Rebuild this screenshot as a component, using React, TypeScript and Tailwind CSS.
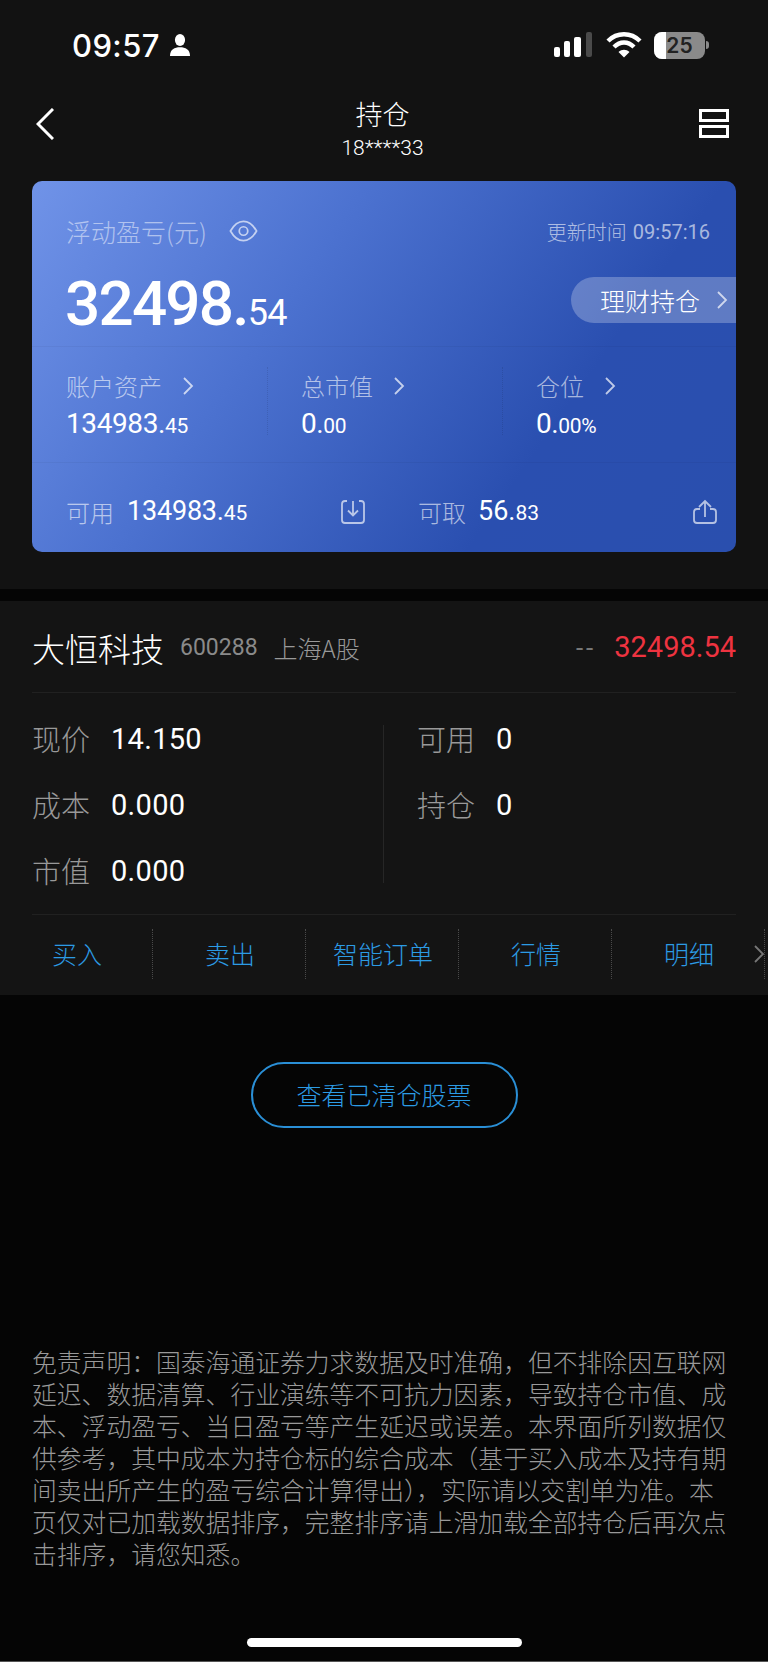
const din = "font-['Roboto','Liberation_Sans',sans-serif]";
const cjk = "font-['Noto_Sans_CJK_SC',sans-serif] font-light";

// full-width punctuation, written as escapes so it survives editing
const colon = "\uFF1A";
const comma = "\uFF0C";
const open = "\uFF08";
const close = "\uFF09";
const disclaimer = `免责声明${colon}国泰海通证券力求数据及时准确${comma}但不排除因互联网延迟、数据清算、行业演练等不可抗力因素${comma}导致持仓市值、成本、浮动盈亏、当日盈亏等产生延迟或误差。本界面所列数据仅供参考${comma}其中成本为持仓标的综合成本${open}基于买入成本及持有期间卖出所产生的盈亏综合计算得出${close}${comma}实际请以交割单为准。本页仅对已加载数据排序${comma}完整排序请上滑加载全部持仓后再次点击排序${comma}请您知悉。`;

function Chevron({ className = "h-5 w-3" }: { className?: string }) {
  return (
    <svg viewBox="0 0 12 20" fill="none" stroke="currentColor" strokeWidth="1.8" className={className} aria-hidden>
      <path d="M2 2 L10 10 L2 18" />
    </svg>
  );
}

function StatusBar() {
  return (
    <div className="flex h-[90px] items-center justify-between pl-[72px] pr-[59px]">
      <div className="flex items-center gap-[10px]">
        <span className="font-['Inter',sans-serif] text-[31px] font-medium leading-none tracking-[0.4px] text-white">09:57</span>
        <svg viewBox="0 0 22 24" className="h-[22px] w-[20px]" fill="#fff" aria-hidden>
          <ellipse cx="11" cy="6.5" rx="5.6" ry="6.5" />
          <path d="M0 24 C0 17 5 14.5 11 14.5 C17 14.5 22 17 22 24 Z" />
        </svg>
      </div>
      <div className="flex items-center">
        <svg viewBox="0 0 39 26" className="h-[26px] w-[39px]" aria-hidden>
          <rect x="0" y="15" width="6" height="10" rx="2" fill="#fff" />
          <rect x="10" y="9" width="6" height="16" rx="2" fill="#fff" />
          <rect x="20" y="5" width="7" height="20" rx="2" fill="#fff" />
          <rect x="32" y="0" width="6" height="25" rx="2" fill="#4a4a4a" />
        </svg>
        <svg viewBox="0 0 36 26" className="ml-[13px] h-[26px] w-9" fill="none" stroke="#fff" aria-hidden>
          <path d="M2 9 C11 0 25 0 34 9" strokeWidth="4.4" />
          <path d="M8 15 C14 9 22 9 28 15" strokeWidth="4.4" />
          <path d="M12.5 20 L18 25.5 L23.5 20 C20 17 16 17 12.5 20 Z" fill="#fff" stroke="none" />
        </svg>
        <div className="relative ml-[12px] h-[27px] w-[51px] overflow-hidden rounded-[8px] bg-[#8a8a8a]">
          <div className="absolute inset-y-0 left-0 w-3 bg-white" />
          <span className="absolute inset-0 flex items-center justify-center font-['Inter',sans-serif] text-[21px] font-semibold leading-none text-[#222]">25</span>
        </div>
        <div className="ml-[1px] h-2 w-[3px] rounded-r-full bg-[#8a8a8a]" />
      </div>
    </div>
  );
}

function NavBar() {
  return (
    <div className="flex h-[91px] items-start pl-9 pr-[39px]">
      <div className="flex-1">
        <svg viewBox="0 0 18 32" fill="none" stroke="#fff" strokeWidth="3" className="mt-[18px] h-8 w-[18px]" aria-hidden>
          <path d="M17 1 L2 16 L17 31" />
        </svg>
      </div>
      <div className="flex flex-col items-center pt-[7px]">
        <span className={`${cjk} text-[27px] leading-[34px] text-white`}>持仓</span>
        <span className={`${din} mt-[5px] text-[21px] font-light leading-6 text-white`}>18****33</span>
      </div>
      <div className="flex flex-1 justify-end">
        <div className="mt-[19px] flex w-[30px] flex-col gap-[3px]">
          <div className="h-[13px] border-[3px] border-white" />
          <div className="h-[13px] border-[3px] border-white" />
        </div>
      </div>
    </div>
  );
}

function Money({ whole, frac, size, small }: { whole: string; frac: string; size: string; small: string }) {
  return (
    <span className={`${din} text-white ${size}`}>
      {whole}.<span className={small}>{frac}</span>
    </span>
  );
}

function Metric({ label, whole, frac, width, divider }: { label: string; whole: string; frac: string; width: string; divider?: boolean }) {
  return (
    <div className={`${width} relative`}>
      <div className="flex items-center gap-[20px]">
        <span className={`${cjk} text-[24px] leading-8 text-white/60`}>{label}</span>
        <Chevron className="h-[22px] w-3 text-white/70" />
      </div>
      <div className="mt-[6px] leading-8">
        <Money whole={whole} frac={frac} size="text-[28px] tracking-[-0.4px]" small="text-[21px]" />
      </div>
      {divider && <div className="absolute right-[33px] top-[-3px] h-[68px] border-r border-dotted border-black/10" />}
    </div>
  );
}

function HoldingsCard() {
  return (
    <div className="mx-8 h-[371px] overflow-hidden rounded-[10px] bg-[linear-gradient(125deg,#7093e8_0%,#4c72d0_35%,#2a4fb0_72%,#2a4fae_100%)]">
      <div className="flex h-[66px] items-end justify-between pl-[34px] pr-[26px]">
        <div className="flex items-center gap-[22px]">
          <span className={`${cjk} text-[25px] leading-8 text-white/50`}>浮动盈亏(元)</span>
          <svg viewBox="0 0 30 24" fill="none" stroke="currentColor" strokeWidth="1.8" className="h-[24px] w-[29px] text-white/65" aria-hidden>
            <path d="M1.5 12 C6 4 10 2 15 2 C20 2 24 4 28.5 12 C24 20 20 22 15 22 C10 22 6 20 1.5 12 Z" />
            <circle cx="15" cy="12" r="4.4" />
          </svg>
        </div>
        <div className="flex items-center gap-[6px] pb-[1px] text-white/60">
          <span className={`${cjk} text-[20px] leading-7`}>更新时间</span>
          <span className={`${din} text-[20px] leading-7`}>09:57:16</span>
        </div>
      </div>
      <div className="mt-[17px] flex h-[82px] items-start justify-between pl-[33px]">
        <Money whole="32498" frac="54" size="mt-[3px] text-[62px] font-medium leading-[74px] tracking-[-1.8px]" small="text-[36px] font-normal tracking-[-0.5px]" />
        <div className="mt-[13px] flex h-[46px] w-[165px] items-center justify-between rounded-l-full bg-white/25 pl-[29px] pr-[8px]">
          <span className={`${cjk} text-[25px] leading-8 text-white`}>理财持仓</span>
          <Chevron className="h-[20px] w-[12px] text-white/70" />
        </div>
      </div>
      <div className="border-t border-black/[0.04] pl-[34px] pt-[23px]">
        <div className="flex h-[92px]">
          <Metric label="账户资产" whole="134983" frac="45" width="w-[235px]" divider />
          <Metric label="总市值" whole="0" frac="00" width="w-[235px]" divider />
          <Metric label="仓位" whole="0" frac="00%" width="w-[200px]" />
        </div>
      </div>
      <div className="flex h-[92px] items-center border-t border-black/[0.04] pl-[34px] pr-[18px] pt-[6px]">
        <div className="flex w-[352px] items-center">
          <span className={`${cjk} w-[61px] text-[24px] leading-8 text-white/60`}>可用</span>
          <Money whole="134983" frac="45" size="w-[213px] text-[27px] tracking-[-0.2px]" small="text-[21px]" />
          <svg viewBox="0 0 26 26" fill="none" stroke="currentColor" strokeWidth="1.8" className="h-[26px] w-[26px] text-white/65" aria-hidden>
            <path d="M7 2 H5 Q2 2 2 5 V21 Q2 24 5 24 H21 Q24 24 24 21 V5 Q24 2 21 2 H19" />
            <path d="M13 2 V16 M8 11.5 L13 16.5 L18 11.5" />
          </svg>
        </div>
        <div className="flex flex-1 items-center">
          <span className={`${cjk} w-[60px] text-[24px] leading-8 text-white/60`}>可取</span>
          <Money whole="56" frac="83" size="flex-1 text-[27px]" small="text-[21px]" />
          <svg viewBox="0 0 26 26" fill="none" stroke="currentColor" strokeWidth="1.8" className="h-[26px] w-[26px] text-white/65" aria-hidden>
            <path d="M8 10 H5 Q2 10 2 13 V21 Q2 24 5 24 H21 Q24 24 24 21 V13 Q24 10 21 10 H18" />
            <path d="M13 18 V2 M7 8 L13 2 L19 8" />
          </svg>
        </div>
      </div>
    </div>
  );
}

function StatLine({ label, value }: { label: string; value: string }) {
  return (
    <div className="flex h-[66px] items-center">
      <span className={`${cjk} w-[79px] text-[29px] text-[#999]`}>{label}</span>
      <span className={`${din} pt-[2px] text-[29px] tracking-[0.3px] text-white`}>{value}</span>
    </div>
  );
}

const actions = ["买入", "卖出", "智能订单", "行情", "明细"];

function StockPanel() {
  return (
    <div className="bg-[#141414]">
      <div className="mx-8 flex h-[92px] items-center justify-between border-b border-[#212121] pt-[3px]">
        <div className="flex items-center">
          <span className={`${cjk} text-[33px] leading-10 text-white`}>大恒科技</span>
          <span className={`${din} ml-[16px] text-[23px] text-[#8a8a8a]`}>600288</span>
          <span className={`${cjk} ml-[16px] text-[24px] text-[#999]`}>上海A股</span>
        </div>
        <div className="flex items-center">
          <span className={`${din} text-[26px] tracking-[3px] text-[#777]`}>--</span>
          <span className={`${din} ml-[18px] text-[29px] text-[#ee3340]`}>32498.54</span>
        </div>
      </div>
      <div className="mx-8 flex h-[222px] items-start border-b border-[#212121] pt-[13px]">
        <div className="w-[351px]">
          <StatLine label="现价" value="14.150" />
          <StatLine label="成本" value="0.000" />
          <StatLine label="市值" value="0.000" />
        </div>
        <div className="mt-[19px] h-[158px] w-px bg-[#262626]" />
        <div className="pl-[33px]">
          <StatLine label="可用" value="0" />
          <StatLine label="持仓" value="0" />
        </div>
      </div>
      <div className="flex h-[80px] items-start pt-[14px]">
        {actions.map((a) => (
          <div key={a} className="flex h-[50px] w-[153px] items-center justify-center border-r border-dotted border-[#4a4a4a] pl-[2px]">
            <span className={`${cjk} text-[25px] text-[#2c9be4]`}>{a}</span>
          </div>
        ))}
        <Chevron className="ml-[-12px] mt-[14px] h-[22px] w-[12px] text-[#777]" />
      </div>
    </div>
  );
}

export default function App() {
  return (
    <div className="flex h-[1662px] w-[768px] flex-col overflow-hidden border-b border-[#555] bg-[#050505]">
      <div className="h-[589px] bg-[#121212]">
        <StatusBar />
        <NavBar />
        <HoldingsCard />
      </div>
      <div className="h-3" />
      <StockPanel />
      <div className="mt-[67px] flex justify-center">
        <button className={`${cjk} h-[66px] w-[267px] rounded-full border-2 border-[#2a8fd6] text-[25px] text-[#2c9be4]`}>
          查看已清仓股票
        </button>
      </div>
      <p className={`${cjk} mt-[217px] pl-8 pr-[40px] text-[24.8px] leading-[32px] text-[#999]`}>{disclaimer}</p>
      <div className="mt-auto mb-[14px] flex justify-center">
        <div className="h-[9px] w-[275px] rounded-full bg-white" />
      </div>
    </div>
  );
}
